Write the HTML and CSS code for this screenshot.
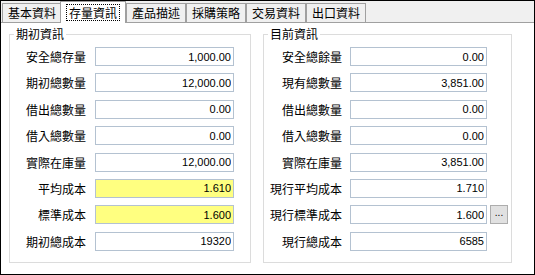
FILE: index.html
```html
<!DOCTYPE html>
<html lang="zh-Hant">
<head>
    <meta charset="UTF-8">
    <title>存量資訊</title>
    <link rel="stylesheet" href="styles.css">
</head>
<body>
<div class="frame">
    <div class="tabs">
        <div class="tab">基本資料</div>
        <div class="tab active"><span class="focus">存量資訊</span></div>
        <div class="tab">產品描述</div>
        <div class="tab">採購策略</div>
        <div class="tab">交易資料</div>
        <div class="tab">出口資料</div>
    </div>

    <div class="panel">
        <fieldset class="group group-start">
            <legend>期初資訊</legend>
            <div class="rows">
                <label>安全總存量</label><input type="text" value="1,000.00" readonly>
                <label>期初總數量</label><input type="text" value="12,000.00" readonly>
                <label>借出總數量</label><input type="text" value="0.00" readonly>
                <label>借入總數量</label><input type="text" value="0.00" readonly>
                <label>實際在庫量</label><input type="text" value="12,000.00" readonly>
                <label>平均成本</label><input type="text" class="required" value="1.610" readonly>
                <label>標準成本</label><input type="text" class="required" value="1.600" readonly>
                <label>期初總成本</label><input type="text" value="19320" readonly>
            </div>
        </fieldset>

        <fieldset class="group group-now">
            <legend>目前資訊</legend>
            <div class="rows">
                <label>安全總餘量</label><input type="text" value="0.00" readonly><span></span>
                <label>現有總數量</label><input type="text" value="3,851.00" readonly><span></span>
                <label>借出總數量</label><input type="text" value="0.00" readonly><span></span>
                <label>借入總數量</label><input type="text" value="0.00" readonly><span></span>
                <label>實際在庫量</label><input type="text" value="3,851.00" readonly><span></span>
                <label>現行平均成本</label><input type="text" value="1.710" readonly><span></span>
                <label>現行標準成本</label><input type="text" value="1.600" readonly><button type="button">...</button>
                <label>現行總成本</label><input type="text" value="6585" readonly><span></span>
            </div>
        </fieldset>
    </div>
</div>
</body>
</html>
```

FILE: styles.css
```css
body {
    margin: 0;
    font-family: 'Noto Sans CJK TC', 'Liberation Sans', sans-serif;
    font-size: 12px;
    color: #000;
}

.frame {
    width: 535px;
    height: 275px;
    box-sizing: border-box;
    border: 1px solid #000;
    background: #fff;
}

.tabs {
    display: flex;
    align-items: flex-end;
    height: 22px;
    box-sizing: border-box;
    padding-left: 1px;
    background: #f0f0f0;
    border-bottom: 1px solid #a0a0a0;
}

.tab {
    height: 19px;
    box-sizing: border-box;
    padding: 0 5px;
    border: 1px solid #a0a0a0;
    border-bottom: none;
    background: #f0f0f0;
    line-height: 17px;
    white-space: nowrap;
}

.tab.active {
    height: 22px;
    margin: 0 0 -1px -2px;
    padding: 0 6px;
    background: #fff;
    line-height: 20px;
}

.focus {
    display: inline-block;
    padding: 0 2px;
    line-height: 15px;
    outline: 1px dotted #000;
    vertical-align: middle;
    margin-top: -2px;
}

.panel {
    display: flex;
    gap: 12px;
    padding: 4px 0 0 8px;
}

.group {
    margin: 0;
    padding: 6px 0 11px 4px;
    border: 1px solid #dcdcdc;
}

.group legend {
    padding: 0 2px;
    line-height: 14px;
}

.group-start {
    width: 242px;
    box-sizing: border-box;
}

.group-now {
    width: 249px;
    box-sizing: border-box;
}

.rows {
    display: grid;
    row-gap: 7.4px;
    align-items: center;
}

.group-start .rows {
    grid-template-columns: 72px 148px;
}

.group-now .rows {
    grid-template-columns: 74px 145px 21px;
}

.rows label {
    text-align: right;
    line-height: 19px;
    white-space: nowrap;
}

.rows input {
    height: 19px;
    box-sizing: border-box;
    margin: 0;
    padding: 0 2px;
    border: 1px solid #b4c2d1;
    background: #fff;
    font-family: 'Liberation Sans', sans-serif;
    font-size: 11px;
    color: #000;
    text-align: right;
    outline: none;
}

.group-start input {
    width: 139px;
    margin-left: 9px;
}

.group-now input {
    width: 137px;
    margin-left: 8px;
}

.rows input.required {
    background: #ffff80;
}

.rows button {
    width: 18px;
    height: 19px;
    margin-left: 3px;
    padding: 0 0 3px;
    border: 1px solid #adadad;
    background: #e1e1e1;
    font-family: 'Liberation Sans', sans-serif;
    font-size: 10px;
    line-height: 12px;
    color: #000;
}
```
